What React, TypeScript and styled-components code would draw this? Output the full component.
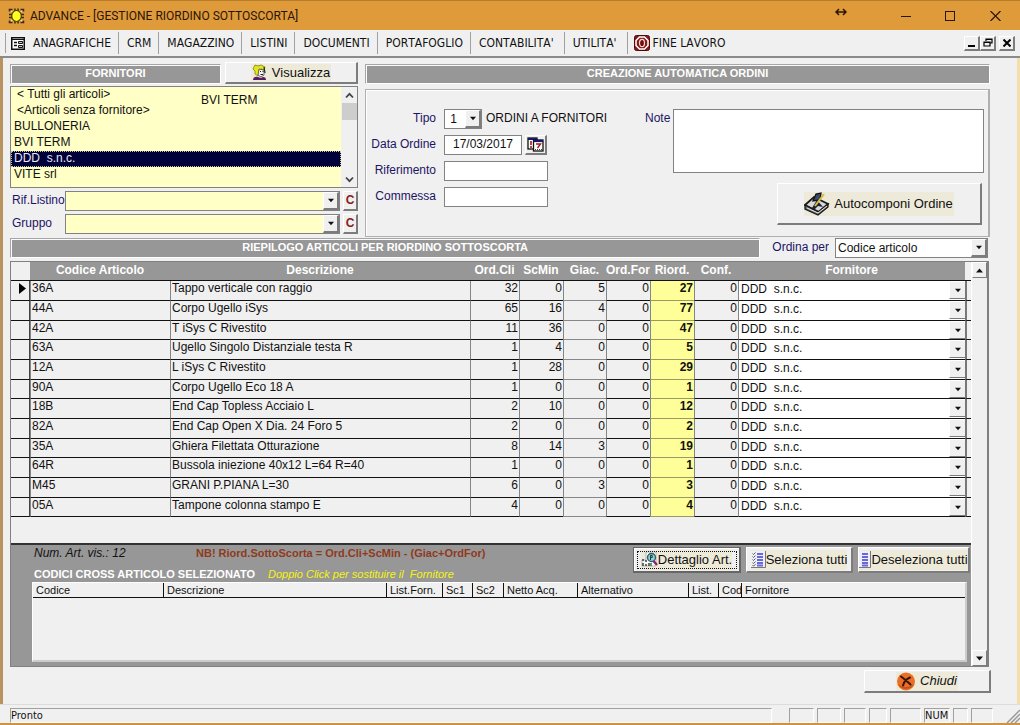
import React from "react";
import styled, { createGlobalStyle, css } from "styled-components";

const Global = createGlobalStyle`
  *, *::before, *::after { box-sizing: border-box; }
  body { margin: 0; background: #f0f0f0; }
  body, button, input, select, textarea {
    font-family: "Liberation Sans", Arial, sans-serif;
    font-size: 12px;
    color: #111;
  }
  button, input, select, textarea { margin: 0; padding: 0; border-radius: 0; outline: none; }
`;

const raised = css`
  background: #f0f0f0;
  border-style: solid;
  border-width: 1px 2px 2px 1px;
  border-color: #fff #7c7c7c #7c7c7c #fff;
`;

const Window = styled.div`
  display: flex;
  flex-direction: column;
  min-height: 100vh;
  border-bottom: 2px solid #cf923f;
`;

/* ---------- title bar ---------- */

const TitleBar = styled.header`
  display: flex;
  align-items: center;
  height: 30px;
  padding: 0 19px 0 8px;
  gap: 5px;
  background: #df9a3a;
  border-top: 1px solid #b57c2c;
`;

const Title = styled.h1`
  flex: 1;
  margin: 0;
  font: 12px Roboto, sans-serif;
  color: #2a1508;
  white-space: nowrap;
`;

const CaptionButton = styled.button<{ $width: number }>`
  display: flex;
  justify-content: flex-end;
  align-items: center;
  width: ${(p) => p.$width}px;
  height: 28px;
  border: 0;
  background: none;
`;

/* ---------- menu ---------- */

const MenuBar = styled.nav`
  display: flex;
  align-items: center;
  height: 28px;
  padding: 0 5px;
  background: #f0f0f0;
  border-bottom: 2px solid #8b8b8b;
`;

const MenuIcon = styled.span`
  display: flex;
  align-items: center;
  height: 20px;
  padding-left: 5px;
  border-left: 1px solid #a0a0a0;
`;

const MenuItem = styled.button<{ $last?: boolean; $roomy?: boolean }>`
  display: flex;
  align-items: center;
  gap: 3px;
  height: 22px;
  padding: 0 ${(p) => (p.$roomy ? 10 : 7)}px 0 ${(p) => (p.$last ? 6 : 8)}px;
  border: 0;
  border-right: ${(p) => (p.$last ? "0" : "1px solid #a0a0a0")};
  background: none;
  font: 12px "DejaVu Sans Condensed", "DejaVu Sans", sans-serif;
  font-kerning: none;
  white-space: nowrap;
`;

const ChildControls = styled.div`
  display: flex;
  margin-left: auto;
`;

const ChildButton = styled.button<{ $spaced?: boolean }>`
  ${raised}
  display: flex;
  align-items: center;
  justify-content: center;
  width: 16px;
  height: 15px;
  margin-left: ${(p) => (p.$spaced ? 3 : 0)}px;
`;

/* ---------- form body ---------- */

const Body = styled.main`
  flex: 1;
  display: flex;
  flex-direction: column;
  padding: 3px 27px 0 7px;
  border-left: 3px solid #b8935f;
  border-right: 3px solid #f3dfae;
`;

const Top = styled.div`
  display: flex;
  gap: 7px;
`;

const Suppliers = styled.section`
  width: 348px;
  flex: none;
`;

const Heading = styled.h2`
  flex: 1;
  height: 20px;
  margin: 0;
  background: #979797;
  border: 1px solid;
  border-color: #a6a6a6 #fff #fff #a6a6a6;
  box-shadow: inset 1px 1px 0 #fafafa;
  font-size: 11px;
  font-weight: bold;
  line-height: 17px;
  text-align: center;
  color: #fff;
  white-space: nowrap;
`;

const SupplierHead = styled.div`
  display: flex;
  align-items: flex-end;
  gap: 4px;
  height: 23px;
  margin-bottom: 2px;
`;

const ActionButton = styled.button<{ $w: number; $h: number }>`
  ${raised}
  display: flex;
  align-items: center;
  justify-content: center;
  width: ${(p) => p.$w}px;
  height: ${(p) => p.$h}px;
  font-size: 14px;
  white-space: nowrap;
`;

const Caption = styled.span<{ $italic?: boolean }>`
  display: flex;
  align-items: center;
  gap: 4px;
  padding-right: 1px;
  background: #edeada;
  font-size: 13px;
  line-height: 18px;
  font-style: ${(p) => (p.$italic ? "italic" : "normal")};
  white-space: nowrap;
`;

const ListFrame = styled.div`
  position: relative;
  display: flex;
  height: 102px;
  margin-bottom: 2px;
  background: #ffffc6;
  border: 1px solid #828282;
`;

const List = styled.ul`
  flex: 1;
  margin: 0;
  padding: 0;
  list-style: none;
`;

const Option = styled.li<{ $indent: number; $selected?: boolean }>`
  height: 16px;
  padding-left: ${(p) => p.$indent}px;
  line-height: 15px;
  white-space: pre;
  ${(p) =>
    p.$selected &&
    css`
      background: #00003a;
      color: #e8e8f4;
      outline: 1px dotted #c8c890;
      outline-offset: -1px;
    `}
`;

const Overlay = styled.span`
  position: absolute;
  left: 190px;
  top: 6px;
`;

const ListScroll = styled.div`
  display: flex;
  flex-direction: column;
  align-items: center;
  justify-content: space-between;
  width: 16px;
  padding: 5px 0 4px;
  background: #f0f0f0;
`;

const ListThumb = styled.div`
  width: 15px;
  height: 17px;
  margin: 4px 0 auto;
  background: #cdcdcd;
`;

const FilterRow = styled.div`
  display: flex;
  align-items: center;
  height: 21px;
  margin-bottom: 2px;
`;

const Label = styled.label<{ $w?: number; $right?: boolean }>`
  flex: none;
  width: ${(p) => (p.$w ? `${p.$w}px` : "auto")};
  padding-right: ${(p) => (p.$right ? 8 : 0)}px;
  padding-bottom: 2px;
  overflow: hidden;
  text-align: ${(p) => (p.$right ? "right" : "left")};
  color: #1c1464;
  white-space: nowrap;
`;

const FilterLabel = styled(Label)`
  padding-left: 2px;
`;

const ComboBox = styled.span<{ $w?: number; $bg?: string }>`
  display: grid;
  ${(p) => (p.$w ? `width: ${p.$w}px; flex: none;` : "flex: 1;")}
  height: 20px;
  background: ${(p) => p.$bg ?? "#fff"};
  border: 1px solid #828282;

  select {
    grid-area: 1 / 1;
    width: 100%;
    min-width: 0;
    height: 100%;
    padding-left: 2px;
    border: 0;
    appearance: none;
    background: transparent;
  }
`;

const Drop = styled.span`
  ${raised}
  grid-area: 1 / 1;
  justify-self: end;
  display: flex;
  align-items: center;
  justify-content: center;
  width: 16px;
  pointer-events: none;
`;

const ClearButton = styled.button`
  ${raised}
  width: 15px;
  height: 20px;
  margin-left: 3px;
  font-weight: bold;
  color: #8a1c1c;
`;

const Order = styled.section`
  flex: 1;
  min-width: 0;
  padding-top: 3px;
`;

const OrderBox = styled.form`
  display: flex;
  height: 148px;
  margin-top: 5px;
  padding: 19px 4px 0 0;
  border-style: solid;
  border-width: 1px 2px 1px 1px;
  border-color: #b0b0b0;
  box-shadow: inset 1px 1px 0 #fff;
`;

const Fields = styled.div`
  display: flex;
  flex-direction: column;
  gap: 6px;
  width: 279px;
  flex: none;
`;

const Field = styled.div`
  display: flex;
  align-items: center;
  height: 20px;
`;

const TextInput = styled.input<{ $w: number }>`
  width: ${(p) => p.$w}px;
  height: 20px;
  padding-bottom: 2px;
  border: 1px solid #828282;
  background: #fff;
  text-align: center;
`;

const CalendarButton = styled.button`
  ${raised}
  display: flex;
  align-items: center;
  justify-content: center;
  width: 22px;
  height: 20px;
  margin-left: 3px;
`;

const After = styled.span`
  margin-left: 4px;
  padding-bottom: 2px;
  white-space: nowrap;
`;

const NoteSide = styled.div`
  flex: 1;
  display: flex;
  flex-direction: column;
  align-items: flex-end;
  gap: 10px;
`;

const NoteRow = styled.div`
  display: flex;
  align-self: stretch;
  line-height: 18px;
`;

const Note = styled.textarea`
  flex: 1;
  height: 64px;
  border: 1px solid #828282;
  background: #fff;
  resize: none;
`;

const ComposeButton = styled(ActionButton)`
  margin-right: 2px;
`;

const SummaryBar = styled.div`
  display: flex;
  align-items: center;
  height: 20px;
  margin: 1px 2px 3px 0;
`;

const SortLabel = styled(Label)`
  margin: 0 6px 0 12px;
`;

/* ---------- article grid ---------- */

const GridFrame = styled.section`
  display: flex;
  margin-right: 1px;
  border-style: solid;
  border-width: 1px 2px 1px 1px;
  border-color: #808080;
`;

const GridMain = styled.div`
  flex: 1;
  min-width: 0;
`;

const Articles = styled.table`
  width: 100%;
  table-layout: fixed;
  border-collapse: separate;
  border-spacing: 0;

  th {
    height: 19px;
    padding: 0;
    background: #979797;
    border-bottom: 1px solid #111;
    color: #fff;
    line-height: 17px;
    vertical-align: top;
    white-space: nowrap;
  }
  th:first-child, th:last-child { background: #f0f0f0; }

  tbody tr { height: 20px; }
  tbody tr:nth-child(3n) { height: 19px; }
`;

const Cell = styled.td<{ $kind?: "mark" | "num" | "soft" | "hot" | "pick" | "edge" }>`
  height: inherit;
  padding: 0 1px;
  border-bottom: 1px solid #111;
  border-left: 1px solid #858585;
  line-height: 15px;
  vertical-align: top;
  white-space: nowrap;

  ${(p) =>
    p.$kind === "mark" &&
    css`
      border-left: 0;
      border-right: 1px solid #444;
      padding: 2px 0 0 8px;
    `}
  ${(p) => (p.$kind === "num" || p.$kind === "soft" || p.$kind === "hot") && "text-align: right;"}
  ${(p) => p.$kind === "soft" && "border-bottom-color: #888;"}
  ${(p) =>
    p.$kind === "hot" &&
    css`
      background: #ffff99;
      border-bottom-color: #999966;
      font-weight: bold;
    `}
  ${(p) => p.$kind === "pick" && "background: #fff; padding: 0;"}
  ${(p) => p.$kind === "edge" && "border-left: 2px solid #777; padding: 0;"}
`;

const RowPick = styled.span`
  display: grid;
  height: 18px;

  select {
    grid-area: 1 / 1;
    width: 100%;
    height: 15px;
    padding-left: 2px;
    border: 0;
    appearance: none;
    background: transparent;
  }
`;

const RowDrop = styled(Drop)`
  border-width: 1px 0 1px 1px;
  padding-top: 1px;
`;

const Blank = styled.div`
  height: 28px;
  border-bottom: 2px solid #333;
`;

const Footer = styled.div`
  padding: 0 4px 4px 21px;
  background: #979797;
`;

const FooterTop = styled.div`
  display: flex;
  align-items: flex-start;
  height: 37px;
  padding-top: 2px;
`;

const Info = styled.div`
  flex: 1;
  display: flex;
  flex-direction: column;
  justify-content: space-between;
  align-self: stretch;
  padding: 0 0 1px 2px;
  line-height: 13px;
  white-space: pre;
`;

const InfoLine = styled.div`
  display: flex;
`;

const Count = styled.em`
  width: 162px;
`;

const Rule = styled.strong`
  font-size: 11px;
  color: #8f3a1c;
`;

const CrossTitle = styled.h3`
  margin: 0 13px 0 0;
  font-size: 11px;
  color: #fff;
`;

const Hint = styled.em`
  font-size: 11px;
  color: #f4f410;
`;

const Tools = styled.div`
  display: flex;
  gap: 5px;
  margin-right: -3px;
`;

const ToolButton = styled.button<{ $w: number; $active?: boolean }>`
  ${raised}
  display: flex;
  align-items: center;
  justify-content: center;
  width: ${(p) => p.$w}px;
  height: 26px;
  ${(p) =>
    p.$active &&
    css`
      outline: 1px dotted #111;
      outline-offset: -5px;
      border-color: #666;
      box-shadow: inset 1px 1px 0 #fff;
    `}
`;

const ToolCaption = styled(Caption)`
  gap: 0;
  padding: 0;
  line-height: 20px;
`;

const CrossBox = styled.div`
  height: 80px;
  background: #f0f0f0;
  border: 1px solid #fff;
  border-right: 2px solid #ccc;
  border-bottom: 2px solid #ccc;
`;

const CrossTable = styled.table`
  width: 100%;
  table-layout: fixed;
  border-spacing: 0;

  th {
    height: 15px;
    padding: 0 0 0 3px;
    border-bottom: 1px solid #111;
    border-left: 1px solid #111;
    overflow: hidden;
    font-size: 11px;
    font-weight: normal;
    line-height: 13px;
    text-align: left;
    white-space: nowrap;
  }
  th:first-child { border-left: 0; }
`;

const GridScroll = styled.div`
  display: flex;
  flex-direction: column;
  justify-content: space-between;
  width: 16px;
  background: #f0f0f0;
  border-left: 1px solid #fff;
`;

const ScrollButton = styled.button`
  ${raised}
  display: flex;
  align-items: center;
  justify-content: center;
  border-width: 1px;
  width: 15px;
  height: 16px;
`;

const CloseRow = styled.div`
  display: flex;
  justify-content: flex-end;
  padding: 3px 0 10px;
  margin-right: -1px;
`;

/* ---------- status bar ---------- */

const StatusBar = styled.footer`
  display: flex;
  align-items: flex-end;
  gap: 3px;
  height: 19px;
  padding: 3px 0 0 10px;
  border-top: 1px solid #dcdcdc;
  font: 11px "DejaVu Sans Condensed", sans-serif;
`;

const StatusPanel = styled.span<{ $w?: number }>`
  ${(p) => (p.$w ? `width: ${p.$w}px;` : "flex: 1; margin-right: 14px;")}
  height: 15px;
  border: 1px solid;
  border-color: #a0a0a0 #fff #fff #a0a0a0;
  line-height: 13px;
`;

const Grip = styled.svg`
  margin-left: 9px;
`;

/* ---------- drawings ---------- */

const Triangle = ({ up = false, size = 5 }: { up?: boolean; size?: number }) => (
  <svg width={size + 2} height={5} viewBox="0 0 7 5" aria-hidden="true">
    <path d={up ? "M0 4.5 3.5.5 7 4.5z" : "M0 .5h7L3.5 4.5z"} fill="#111" />
  </svg>
);

const Chevron = ({ up = false }: { up?: boolean }) => (
  <svg width="9" height="7" viewBox="0 0 9 7" aria-hidden="true">
    <path d={up ? "M1 5.5 4.500 1.800 8 5.500" : "M1 1.500 4.500 5.200 8 1.500"} fill="none" stroke="#444" strokeWidth="1.800" />
  </svg>
);

const AppIcon = () => (
  <svg width="17" height="16" viewBox="0 0 17 16" aria-hidden="true">
    <path
      d="M1.500 3.500V1.500h3M15.500 3.500V1.500h-3M1 6.500h3M1 9.500h3M13 6.500h3M13 9.500h3M1.500 12.500v2h3M15.500 12.500v2h-3M7 .5v3M10 .5v3M7 15.500v-3M10 15.500v-3"
      fill="none"
      stroke="#3a2c0c"
      strokeWidth="1.500"
    />
    <path d="M3 3l3 2M14 3l-3 2M3 13l3-2M14 13l-3-2" stroke="#e8e8d0" strokeWidth="1.200" />
    <ellipse cx="8.500" cy="8" rx="4.800" ry="5.500" fill="#ffff1e" stroke="#4a3c00" strokeWidth="1.200" />
  </svg>
);

const FormIcon = () => (
  <svg width="14" height="13" viewBox="0 0 14 13" aria-hidden="true">
    <rect x=".75" y=".75" width="12.500" height="11.500" fill="#fff" stroke="#111" strokeWidth="1.500" />
    <path d="M1 2.500h12" stroke="#111" />
    <path d="M3 5.500h3M3 8.500h3" stroke="#111" strokeWidth="1.300" />
    <path d="M7.500 4.500h4v2h-4zM7.500 8.500h4v2h-4z" fill="#ccc" stroke="#111" />
  </svg>
);

const PowerIcon = () => (
  <svg width="16" height="16" viewBox="0 0 16 16" aria-hidden="true">
    <rect x=".5" y=".5" width="15" height="15" rx="2" fill="#8b1616" stroke="#4e0909" />
    <path d="M5.500 2h5L14 5.500v5L10.500 14h-5L2 10.500v-5z" fill="#8b1616" stroke="#fff" strokeWidth="1.500" />
    <ellipse cx="8" cy="8" rx="2.500" ry="3.700" fill="#6d0c0c" stroke="#f3dada" strokeWidth="1.200" />
  </svg>
);

const FaceIcon = () => (
  <svg width="17" height="17" viewBox="0 0 17 17" aria-hidden="true">
    <path d="M4 1l3 1 3-1 4 2-1 3-3-1-2 3-1 4-3-2 0-3-2-2z" fill="#e2e61c" stroke="#7d8010" strokeWidth=".8" />
    <path d="M8 5l5 1v5l-3 2-3-2z" fill="#f3f0e4" stroke="#444" strokeWidth=".8" />
    <path d="M9 7.500h1M11.500 7.500h1M9.500 10.500h2.500" stroke="#222" />
    <path d="M2 16c0-3 3-4 5-3l3 1 2-1c2 0 3 1 3 3z" fill="#571b63" />
    <path d="M13 3l1 6" stroke="#222" strokeWidth="1.200" />
  </svg>
);

const CalendarIcon = () => (
  <svg width="17" height="15" viewBox="0 0 17 15" aria-hidden="true">
    <rect x="1" y="1" width="9" height="11" fill="#fff" stroke="#111" strokeWidth="1.300" />
    <path d="M1 2h9" stroke="#17176b" strokeWidth="2" />
    <path d="M4 4v4M4 9v2" stroke="#a01c1c" strokeWidth="1.600" />
    <rect x="6.500" y="3" width="9.500" height="11" fill="#fff" stroke="#111" strokeWidth="1.300" />
    <path d="M6.500 4h9.500" stroke="#17176b" strokeWidth="2.200" />
    <path d="M9 7h4.500L10.500 11" fill="none" stroke="#a01c1c" strokeWidth="1.400" />
    <path d="M8 12.500h7" stroke="#444" strokeDasharray="1 1" />
  </svg>
);

const ComposeIcon = () => (
  <svg width="26" height="24" viewBox="0 0 26 24" aria-hidden="true">
    <path d="M1 13 10 5l14 7-9 8z" fill="#d9d9d9" stroke="#1a1a1a" strokeWidth="1.800" />
    <path d="M1 13v4l13 6 10-8v-3l-10 8z" fill="#6f6f6f" stroke="#1a1a1a" strokeWidth="1.300" />
    <path d="M3 16l11 5 9-7" fill="none" stroke="#e8e8e8" />
    <path d="M9 9l3-7 5-1-1 7z" fill="#3c4a72" stroke="#111" strokeWidth="1.300" />
    <path d="M8 16l5-8 6 7-5-1-4 4z" fill="#1b2138" />
    <path d="M11 14 20 2" stroke="#d7bd3c" strokeWidth="2" />
  </svg>
);

const DetailIcon = () => (
  <svg width="17" height="17" viewBox="0 0 17 17" aria-hidden="true">
    <path d="M5 1h10v14H1V9h4z" fill="#f8f8f8" stroke="#aaa" strokeWidth=".8" />
    <path d="M2 8v2M2 12v3M5 9v2M5 13v2M8 12v3" stroke="#333" strokeWidth="1.400" />
    <circle cx="10.500" cy="6.500" r="4" fill="#8ed0cb" stroke="#2d5b66" strokeWidth="1.300" />
    <path d="M9.500 9V4.500h1.700v2H9.500" fill="none" stroke="#163c44" />
    <path d="M12.500 10l3.500 4" stroke="#8f1f7a" strokeWidth="2.400" />
    <path d="M10 12v3" stroke="#2b7d43" strokeWidth="1.500" />
  </svg>
);

const ListIcon = ({ checks = false }: { checks?: boolean }) => (
  <svg width={checks ? 15 : 12} height="17" viewBox={checks ? "0 0 15 17" : "3 0 12 17"} aria-hidden="true">
    <path d="M0 0h15v17H0z" fill="#eeeef8" />
    <path d="M14.500 0v16.500H0" fill="none" stroke="#777" />
    <path d="M6 3h6M6 6h6M6 9h6M6 12h6M6 14.500h6" stroke="#6868d8" strokeWidth="1.800" />
    {checks && (
      <path d="M1.500 2.500l1 1 2-2M1.500 5.500l1 1 2-2M1.500 8.500l1 1 2-2M1.500 11.500l1 1 2-2M1.500 14.200l1 1 2-2" fill="none" stroke="#333" strokeWidth=".8" />
    )}
  </svg>
);

const CloseIcon = () => (
  <svg width="20" height="19" viewBox="0 0 20 19" aria-hidden="true">
    <circle cx="10" cy="9.500" r="9" fill="#e96f27" />
    <path d="M2 12a9 9 0 0 0 16 0c-5 4-11 4-16 0z" fill="#c5531a" />
    <path d="M5 4.500c3 2 6 5 9.500 8M14 5.500C10 7 8 9.500 7 13.500" fill="none" stroke="#3a1408" strokeWidth="2" strokeLinecap="round" />
  </svg>
);

/* ---------- data ---------- */

const menu = ["ANAGRAFICHE", "CRM", "MAGAZZINO", "LISTINI", "DOCUMENTI", "PORTAFOGLIO", "CONTABILITA'", "UTILITA'"];

const suppliers = [
  { name: "< Tutti gli articoli>", indent: 6 },
  { name: "<Articoli senza fornitore>", indent: 6 },
  { name: "BULLONERIA", indent: 3 },
  { name: "BVI TERM", indent: 3 },
  { name: "DDD  s.n.c.", indent: 3 },
  { name: "VITE srl", indent: 3 },
];

const articles: [string, string, number, number, number, number, number, number][] = [
  ["36A", "Tappo verticale con raggio", 32, 0, 5, 0, 27, 0],
  ["44A", "Corpo Ugello iSys", 65, 16, 4, 0, 77, 0],
  ["42A", "T iSys C Rivestito", 11, 36, 0, 0, 47, 0],
  ["63A", "Ugello Singolo Distanziale testa R", 1, 4, 0, 0, 5, 0],
  ["12A", "L iSys C Rivestito", 1, 28, 0, 0, 29, 0],
  ["90A", "Corpo Ugello Eco 18 A", 1, 0, 0, 0, 1, 0],
  ["18B", "End Cap Topless Acciaio L", 2, 10, 0, 0, 12, 0],
  ["82A", "End Cap Open X Dia. 24 Foro 5", 2, 0, 0, 0, 2, 0],
  ["35A", "Ghiera Filettata Otturazione", 8, 14, 3, 0, 19, 0],
  ["64R", "Bussola iniezione 40x12 L=64 R=40", 1, 0, 0, 0, 1, 0],
  ["M45", "GRANI P.PIANA L=30", 6, 0, 3, 0, 3, 0],
  ["05A", "Tampone colonna stampo E", 4, 0, 0, 0, 4, 0],
];

const columns: [string, number | undefined][] = [
  ["", 19],
  ["Codice Articolo", 140],
  ["Descrizione", 300],
  ["Ord.Cli", 49],
  ["ScMin", 44],
  ["Giac.", 43],
  ["Ord.For", 44],
  ["Riord.", 44],
  ["Conf.", 44],
  ["Fornitore", undefined],
  ["", 6],
];

const crossColumns: [string, number | undefined][] = [
  ["Codice", 130],
  ["Descrizione", 223],
  ["List.Forn.", 56],
  ["Sc1", 30],
  ["Sc2", 31],
  ["Netto Acq.", 74],
  ["Alternativo", 111],
  ["List.", 30],
  ["Cod", 23],
  ["Fornitore", undefined],
];

const statusBoxes = [25, 24, 22, 18, 31, 26, 15, 22];

/* ---------- parts ---------- */

function Combo({ id, value = "", width, bg }: { id: string; value?: string; width?: number; bg?: string }) {
  return (
    <ComboBox $w={width} $bg={bg}>
      <select id={id} defaultValue={value}>
        <option value={value}>{value}</option>
      </select>
      <Drop>
        <Triangle size={4} />
      </Drop>
    </ComboBox>
  );
}

function ArticleGrid() {
  return (
    <Articles>
      <colgroup>
        {columns.map(([, w], i) => (
          <col key={i} width={w} />
        ))}
      </colgroup>
      <thead>
        <tr>
          {columns.map(([name], i) => (
            <th key={i}>{name}</th>
          ))}
        </tr>
      </thead>
      <tbody>
        {articles.map(([code, text, cli, min, giac, ordFor, riord, conf], i) => (
          <tr key={code}>
            <Cell $kind="mark">
              {i === 0 && (
                <svg width="7" height="11" viewBox="0 0 7 11" aria-hidden="true">
                  <path d="M0 0l7 5.500L0 11z" fill="#000" />
                </svg>
              )}
            </Cell>
            <Cell>{code}</Cell>
            <Cell>{text}</Cell>
            <Cell $kind="num">{cli}</Cell>
            <Cell $kind="num">{min}</Cell>
            <Cell $kind="soft">{giac}</Cell>
            <Cell $kind="num">{ordFor}</Cell>
            <Cell $kind="hot">{riord}</Cell>
            <Cell $kind="num">{conf}</Cell>
            <Cell $kind="pick">
              <RowPick>
                <select aria-label={`Fornitore ${code}`}>
                  <option>{"DDD\u00a0 s.n.c."}</option>
                </select>
                <RowDrop>
                  <Triangle size={4} />
                </RowDrop>
              </RowPick>
            </Cell>
            <Cell $kind="edge" />
          </tr>
        ))}
      </tbody>
    </Articles>
  );
}

export default function App() {
  return (
    <Window>
      <Global />
      <TitleBar>
        <AppIcon />
        <Title>ADVANCE - [GESTIONE RIORDINO SOTTOSCORTA]</Title>
        <svg width="12" height="20" viewBox="0 0 12 20" aria-hidden="true">
          <path d="M1 6h10M4 3 1 6l3 3M8 3l3 3-3 3" fill="none" stroke="#2a1508" strokeWidth="1.500" />
        </svg>
        <CaptionButton $width={59} aria-label="Riduci a icona">
          <svg width="10" height="10" viewBox="0 0 10 10">
            <path d="M0 5.500h10" stroke="#2a1508" />
          </svg>
        </CaptionButton>
        <CaptionButton $width={39} aria-label="Ingrandisci">
          <svg width="10" height="10" viewBox="0 0 10 10">
            <rect x=".5" y=".5" width="9" height="9" fill="none" stroke="#2a1508" />
          </svg>
        </CaptionButton>
        <CaptionButton $width={41} aria-label="Chiudi finestra">
          <svg width="11" height="10" viewBox="0 0 11 10">
            <path d="M.5 0l10 10M10.500 0l-10 10" stroke="#2a1508" strokeWidth="1.200" />
          </svg>
        </CaptionButton>
      </TitleBar>

      <MenuBar>
        <MenuIcon>
          <FormIcon />
        </MenuIcon>
        {menu.map((name) => (
          <MenuItem key={name} $roomy={name.endsWith("'")}>
            {name}
          </MenuItem>
        ))}
        <MenuItem $last>
          <PowerIcon />
          FINE LAVORO
        </MenuItem>
        <ChildControls>
          <ChildButton aria-label="Riduci">
            <svg width="8" height="8" viewBox="0 0 8 8">
              <path d="M0 7h7" stroke="#000" strokeWidth="2" />
            </svg>
          </ChildButton>
          <ChildButton aria-label="Ripristina">
            <svg width="10" height="9" viewBox="0 0 10 9">
              <path d="M3 3V1h6v4H7M3 1.500h6M1 4h6v4H1zM1 4.500h6" fill="none" stroke="#000" strokeWidth="1.200" />
            </svg>
          </ChildButton>
          <ChildButton $spaced aria-label="Chiudi scheda">
            <svg width="8" height="8" viewBox="0 0 8 8">
              <path d="M.5.5l7 7M7.500.5l-7 7" stroke="#000" strokeWidth="2" />
            </svg>
          </ChildButton>
        </ChildControls>
      </MenuBar>

      <Body>
        <Top>
          <Suppliers>
            <SupplierHead>
              <Heading>FORNITORI</Heading>
              <ActionButton $w={133} $h={22}>
                <Caption>
                  <FaceIcon />
                  Visualizza
                </Caption>
              </ActionButton>
            </SupplierHead>
            <ListFrame>
              <List role="listbox" aria-label="Fornitori">
                {suppliers.map((s, i) => (
                  <Option key={s.name} role="option" aria-selected={i === 4} $indent={s.indent} $selected={i === 4}>
                    {s.name}
                  </Option>
                ))}
              </List>
              <Overlay>BVI TERM</Overlay>
              <ListScroll>
                <Chevron up />
                <ListThumb />
                <Chevron />
              </ListScroll>
            </ListFrame>
            <FilterRow>
              <FilterLabel $w={55} htmlFor="listino">Rif.Listino</FilterLabel>
              <Combo id="listino" bg="#ffffc6" />
              <ClearButton aria-label="Cancella listino">C</ClearButton>
            </FilterRow>
            <FilterRow>
              <FilterLabel $w={55} htmlFor="gruppo">Gruppo</FilterLabel>
              <Combo id="gruppo" bg="#ffffc6" />
              <ClearButton aria-label="Cancella gruppo">C</ClearButton>
            </FilterRow>
          </Suppliers>

          <Order>
            <Heading>CREAZIONE AUTOMATICA ORDINI</Heading>
            <OrderBox>
              <Fields>
                <Field>
                  <Label $w={78} $right htmlFor="tipo">Tipo</Label>
                  <Combo id="tipo" value={"\u00a01"} width={38} />
                  <After>ORDINI A FORNITORI</After>
                </Field>
                <Field>
                  <Label $w={78} $right htmlFor="data">Data Ordine</Label>
                  <TextInput id="data" $w={78} defaultValue="17/03/2017" />
                  <CalendarButton type="button" aria-label="Calendario">
                    <CalendarIcon />
                  </CalendarButton>
                </Field>
                <Field>
                  <Label $w={78} $right htmlFor="rif">Riferimento</Label>
                  <TextInput id="rif" $w={104} />
                </Field>
                <Field>
                  <Label $w={78} $right htmlFor="comm">Commessa</Label>
                  <TextInput id="comm" $w={104} />
                </Field>
              </Fields>
              <NoteSide>
                <NoteRow>
                  <Label $w={28} htmlFor="note">Note</Label>
                  <Note id="note" />
                </NoteRow>
                <ComposeButton type="button" $w={205} $h={42}>
                  <Caption>
                    <ComposeIcon />
                    Autocomponi Ordine
                  </Caption>
                </ComposeButton>
              </NoteSide>
            </OrderBox>
          </Order>
        </Top>

        <SummaryBar>
          <Heading>RIEPILOGO ARTICOLI PER RIORDINO SOTTOSCORTA</Heading>
          <SortLabel htmlFor="ordina">Ordina per</SortLabel>
          <Combo id="ordina" value="Codice articolo" width={153} />
        </SummaryBar>

        <GridFrame>
          <GridMain>
            <ArticleGrid />
            <Blank />
            <Footer>
              <FooterTop>
                <Info>
                  <InfoLine>
                    <Count>Num. Art. vis.: 12</Count>
                    <Rule>NB! Riord.SottoScorta = Ord.Cli+ScMin - (Giac+OrdFor)</Rule>
                  </InfoLine>
                  <InfoLine>
                    <CrossTitle>CODICI CROSS ARTICOLO SELEZIONATO</CrossTitle>
                    <Hint>{"Doppio Click per sostituire il  Fornitore"}</Hint>
                  </InfoLine>
                </Info>
                <Tools>
                  <ToolButton $w={108} $active>
                    <ToolCaption>
                      <DetailIcon />
                      Dettaglio Art.
                    </ToolCaption>
                  </ToolButton>
                  <ToolButton $w={107}>
                    <ToolCaption>
                      <ListIcon checks />
                      Seleziona tutti
                    </ToolCaption>
                  </ToolButton>
                  <ToolButton $w={112}>
                    <ToolCaption>
                      <ListIcon />
                      Deseleziona tutti
                    </ToolCaption>
                  </ToolButton>
                </Tools>
              </FooterTop>
              <CrossBox>
                <CrossTable>
                  <colgroup>
                    {crossColumns.map(([name, w]) => (
                      <col key={name} width={w} />
                    ))}
                  </colgroup>
                  <thead>
                    <tr>
                      {crossColumns.map(([name]) => (
                        <th key={name}>{name}</th>
                      ))}
                    </tr>
                  </thead>
                </CrossTable>
              </CrossBox>
            </Footer>
          </GridMain>
          <GridScroll>
            <ScrollButton aria-label="Scorri su">
              <Triangle up />
            </ScrollButton>
            <ScrollButton aria-label="Scorri giù">
              <Triangle />
            </ScrollButton>
          </GridScroll>
        </GridFrame>

        <CloseRow>
          <ActionButton $w={127} $h={23}>
            <Caption $italic>
              <CloseIcon />
              Chiudi
            </Caption>
          </ActionButton>
        </CloseRow>
      </Body>

      <StatusBar>
        <StatusPanel>Pronto</StatusPanel>
        {statusBoxes.map((w, i) => (
          <StatusPanel key={i} $w={w}>
            {i === 5 ? "NUM" : ""}
          </StatusPanel>
        ))}
        <Grip width="15" height="15" viewBox="0 0 15 15" aria-hidden="true">
          <path d="M2 15 15 2M6 15l9-9M10 15l5-5" stroke="#999" strokeWidth="1.500" />
        </Grip>
      </StatusBar>
    </Window>
  );
}
